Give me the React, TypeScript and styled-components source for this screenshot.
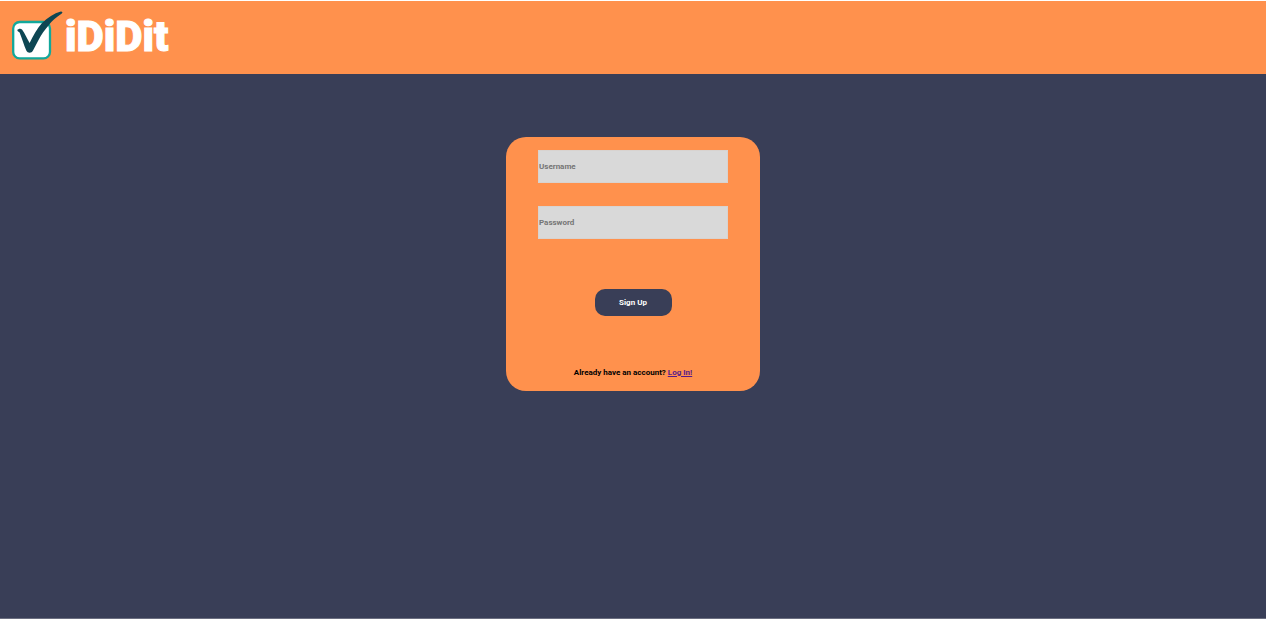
import React from "react";
import styled, { createGlobalStyle } from "styled-components";

const orange = "#ff914d";
const navy = "#393e57";
const smallBold = `700 8px/13px "Roboto", sans-serif`;

const GlobalStyle = createGlobalStyle`
  *, *::before, *::after { box-sizing: border-box; }
  html { background: #ffffff; }
  body { margin: 0; font-family: "Roboto", sans-serif; }
`;

const Page = styled.div`
  min-height: 100vh;
  display: flex;
  flex-direction: column;
  background: ${navy};
  border-top: 1px solid #ffffff;
  border-bottom: 1px solid #6b6e80;
`;

const Header = styled.header`
  display: flex;
  align-items: flex-start;
  height: 73px;
  padding: 8px 10px;
  background: ${orange};
`;

const Brand = styled.a`
  display: flex;
  gap: 1px;
  color: #ffffff;
  text-decoration: none;
`;

const BrandName = styled.span`
  font-size: 42px;
  font-weight: 900;
  line-height: 56px;
  -webkit-text-stroke: 1px #ffffff;
`;

const Main = styled.main`
  flex: 1;
  display: flex;
  flex-direction: column;
  align-items: center;
  padding: 63px 16px;
`;

const Card = styled.form`
  display: flex;
  flex-direction: column;
  align-items: center;
  width: 100%;
  max-width: 254px;
  padding: 13px 32px 12px;
  border-radius: 20px;
  background: ${orange};
`;

const Fields = styled.div`
  display: flex;
  flex-direction: column;
  gap: 23px;
  width: 100%;
`;

const Field = styled.input`
  width: 100%;
  height: 33px;
  padding: 0 0 1px;
  border: 1px solid #d8d3d0;
  border-radius: 0;
  background: #d9d9d9;
  color: #222222;
  font: ${smallBold};

  &::placeholder {
    color: #757575;
    opacity: 1;
  }
`;

const SubmitButton = styled.button`
  width: 77px;
  height: 27px;
  margin: 50px 0;
  padding: 0;
  border: 0;
  border-radius: 10px;
  background: ${navy};
  color: #ffffff;
  font: ${smallBold};
  cursor: pointer;
`;

const Prompt = styled.p`
  margin: 0;
  color: #000000;
  font: ${smallBold};
  white-space: nowrap;
`;

const LoginLink = styled.a`
  color: #551a8b;
`;

function CheckLogo() {
  return (
    <svg width="54" height="54" viewBox="10 9 54 54" aria-hidden="true">
      <rect x="13.2" y="22" width="36.8" height="36.4" rx="6.5" fill="#fff" stroke="#12a89b" strokeWidth="2.3" />
      <path
        d="M17.3 30C18.2 28.7 20.6 28 22 29.5C24.8 33 27 38.5 29.6 43C33 36 37 28.8 42 23C47.5 17.5 54 13.5 60.8 11.5C62.4 11.4 63 12.5 61.8 13.6C56.5 17 52 21 48.5 25.5C44.5 30 41.5 34.5 38.8 39.5L33 50.5C31.5 53.5 27.8 53.5 26.3 50.5C23.8 45 22.2 38.5 19.6 32.4C18.8 31.6 17.5 31.6 17.3 30Z"
        fill="#0d4653"
      />
    </svg>
  );
}

export default function App() {
  return (
    <>
      <GlobalStyle />
      <Page>
        <Header>
          <Brand href="#">
            <CheckLogo />
            <BrandName>iDiDit</BrandName>
          </Brand>
        </Header>
        <Main>
          <Card onSubmit={(event) => event.preventDefault()}>
            <Fields>
              <Field type="text" name="username" placeholder="Username" aria-label="Username" />
              <Field type="password" name="password" placeholder="Password" aria-label="Password" />
            </Fields>
            <SubmitButton type="submit">Sign Up</SubmitButton>
            <Prompt>
              Already have an account? <LoginLink href="#login">Log In!</LoginLink>
            </Prompt>
          </Card>
        </Main>
      </Page>
    </>
  );
}
